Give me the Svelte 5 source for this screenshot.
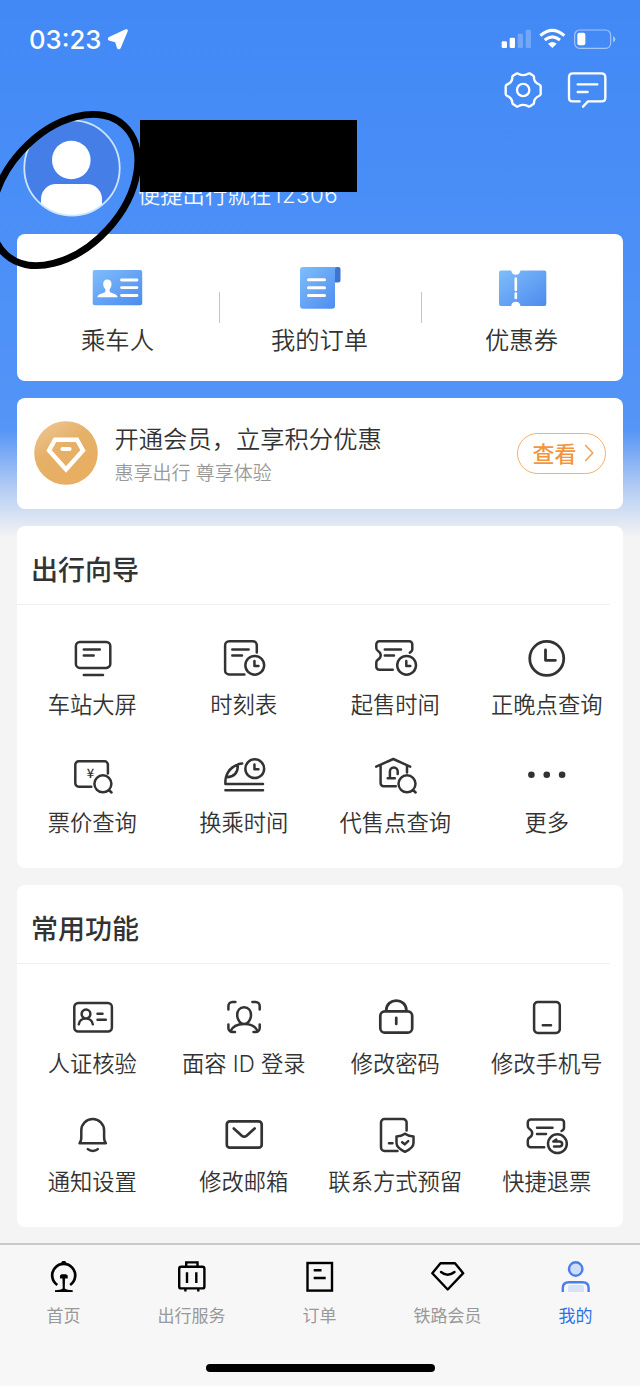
<script lang="ts">
	type Item = { label: string; d: string; sign?: string; width?: number };

	function circle(x: number, y: number, r: number) {
		return `M${x - r} ${y}a${r} ${r} 0 1 0 ${2 * r} 0a${r} ${r} 0 1 0 ${-2 * r} 0z`;
	}

	function box(x: number, y: number, w: number, h: number, r: number) {
		return `M${x + r} ${y}h${w - 2 * r}a${r} ${r} 0 0 1 ${r} ${r}v${h - 2 * r}a${r} ${r} 0 0 1 ${-r} ${r}h${2 * r - w}a${r} ${r} 0 0 1 ${-r} ${-r}v${2 * r - h}a${r} ${r} 0 0 1 ${r} ${-r}z`;
	}

	function clock(x: number, y: number) {
		return circle(x, y, 9.4) + `M${x - 0.3} ${y - 4.2}v4.8h4`;
	}

	function lens(x: number, y: number) {
		return circle(x, y, 8.5) + `M${x + 6} ${y + 6.2}l2.6 2.5`;
	}

	const sections: { title: string; items: Item[] }[] = [
		{
			title: "出行向导",
			items: [
				{ label: "车站大屏", d: box(6.9, 8, 34.4, 25.9, 4) + "M14.8 15.5H30.8M14.8 21.4H24.7M14.8 41H34" },
				{ label: "时刻表", d: "M36.8 18.5V11.2a4 4 0 0 0-4-4H9.1a4 4 0 0 0-4 4V36.4a4 4 0 0 0 4 4H24.4M12.3 15.5H28.6M12.3 21.4H22" + clock(34.75, 31.3) },
				{ label: "起售时间", d: "M37.8 18.6c1.8-.9 2.5-1.5 2.5-3.3V10.2a3 3 0 0 0-3-3H7.3a3 3 0 0 0-3 3V14c0 1.6 .5 2.3 2 3.2c3.2 1.9 3.2 6.3 0 8.2c-1.5 .9-2 1.6-2 3.2v4.1a3 3 0 0 0 3 3H20.7M12.8 15.5H29M12.8 21.4H22" + clock(34.6, 31.3) },
				{ label: "正晚点查询", d: circle(23.75, 24.4, 17) + "M22.5 16v10.3h9.9", width: 2.8 },
				{ label: "票价查询", d: "M38.9 21.5V12.7a3.4 3.4 0 0 0-3.4-3.4H9.7a3.4 3.4 0 0 0-3.4 3.4V31.3a3.4 3.4 0 0 0 3.4 3.4H22.3" + lens(33.9, 31.8), sign: "¥" },
				{ label: "换乘时间", d: "M22.2 11.4C14 12 6 19.5 5.4 28.5V32H43M5.4 38.3H43M17.9 12.6C18 20 14.5 25 6.5 25.2C7 20 11 15 17.9 12.6" + clock(34.75, 16.7) },
				{ label: "代售点查询", d: "M4.2 14.7L21.25 7L38.2 14.7M8.6 13.3V31.3a3 3 0 0 0 3 3H23.8M35 13.3V20.5M15.7 26.3H22.8M17.9 26V19.5a3.9 3.9 0 0 1 7.8 0v2.4" + lens(35, 31.8) },
				{ label: "更多", d: "M8.4 22.7h.01M23.75 22.7h.01M39.1 22.7h.01", width: 6.6 }
			]
		},
		{
			title: "常用功能",
			items: [
				{ label: "人证核验", d: box(5.3, 10, 37.6, 28.6, 4) + circle(17, 21, 4.4) + "M9.8 31.3C10.5 23.5 23 23.5 23.8 31.3M28.5 20.7H33.5M28.5 26.7H36.8" },
				{ label: "面容 ID 登录", d: "M8.4 16.5V13a4 4 0 0 1 4-4h3M32.4 9h3.3a4 4 0 0 1 4 4v3.5M8.4 31.5V35a4 4 0 0 0 4 4H15M39.7 31.5V35a4 4 0 0 1-4 4H33.5M24.1 14.3c4.5 0 6.9 3.3 6.9 7.8S28 31 24.1 31S17.2 26.6 17.2 22.1S19.6 14.3 24.1 14.3M10.5 38.3C12.5 33.5 18 31 24.1 31S35.7 33.5 37.7 38.3" },
				{ label: "修改密码", d: box(8.3, 18.3, 31.9, 21.4, 4.5) + "M14.2 18V17.6c0-13.3 20.2-13.3 20.2 0V18M24.25 24.9v6.1", width: 2.7 },
				{ label: "修改手机号", d: box(11.1, 9, 25.7, 30.9, 3.6) + "M19.8 32.3H28" },
				{ label: "通知设置", d: "M10.5 32.3C12 31 12.3 29 12.3 26V19.4a11.4 11.4 0 0 1 22.8 0V26c0 3 .3 5 1.8 6.3zM18.8 38.2c2.5 2.3 7.5 2.3 10 0" },
				{ label: "修改邮箱", d: box(6.8, 10.3, 34.9, 26.4, 3) + "M13.8 17.5l8 7.2q2.4 2 4.8 0l8-7.2", width: 2.7 },
				{ label: "联系方式预留", d: "M34.6 19.6V11.6a3.5 3.5 0 0 0-3.5-3.5H12.5A3.5 3.5 0 0 0 9 11.6V36.5a3.5 3.5 0 0 0 3.5 3.5H25.5M17 32.3H20.5M33 22.7c2.5 1.8 5 2.6 8.5 2.8v6.5c0 4-3.5 6.5-8.5 8.8c-5-2.3-8.5-4.8-8.5-8.8V25.5c3.5-.2 6-1 8.5-2.8M30.2 31.2l2.5 2.2 3.5-3.2" },
				{ label: "快捷退票", d: "M38.5 20c1.8-.9 2.5-1.5 2.5-3.3V11.6a3 3 0 0 0-3-3H7.8a3 3 0 0 0-3 3V15c0 1.6 .5 2.3 2 3.2c3.2 1.9 3.2 6.3 0 8.2c-1.5 .9-2 1.6-2 3.2v3.7a3 3 0 0 0 3 3H21.2M14 16.7H29.5M14 22.9H23" + circle(34.4, 32.7, 9.4) + "M31 35.6h5.3c3.8 0 3.8-5 0-5h-6l3-2" }
			]
		}
	];

	const tabs = ["首页", "出行服务", "订单", "铁路会员", "我的"];
</script>

<div class="page">
	<div class="status">
		<div class="time">
			<span>03:23</span>
			<svg width="22" height="22" viewBox="321 86 66 66">
				<path d="M379 94L329 117Q327 119 330 120L349 125L355 144Q356 147 358 144Z" fill="#fff" stroke="#fff" stroke-width="9" stroke-linejoin="round" />
			</svg>
		</div>
		<svg width="117" height="22" viewBox="60 85 351 66">
			<g fill="#fff">
				<rect x="65" y="125" width="16" height="20" rx="4" />
				<rect x="89" y="114" width="16" height="31" rx="4" />
				<rect x="113" y="102" width="16" height="43" rx="4" opacity="0.25" />
				<rect x="137" y="90" width="16" height="55" rx="4" opacity="0.25" />
				<path d="M217 145L204 132Q217 122 230 132Z" />
				<rect x="292" y="99" width="24" height="38" rx="6" />
				<path d="M399 110Q406 112 406 119T399 128Z" opacity="0.5" />
			</g>
			<g fill="none" stroke="#fff">
				<path d="M181 108Q217 76 253 108M194 121Q217 102 240 121" stroke-width="9" />
				<rect x="284" y="91" width="108" height="55" rx="15" stroke-width="3.5" opacity="0.5" />
			</g>
		</svg>
	</div>

	<div class="tools">
		<svg width="40" height="40" viewBox="68 211 120 120">
			<g fill="none" stroke="#fff" stroke-width="7" stroke-linejoin="round">
				<path d="M108 222Q112 220 115 223Q128 230 142 223Q146 220 150 222L159 228Q162 231 161 236Q163 249 176 254Q181 256 181 260V283Q181 287 176 289Q163 294 161 307Q162 312 158 314L149 320Q146 322 142 319Q128 312 115 319Q112 322 108 320L99 314Q95 312 96 307Q94 294 81 289Q76 287 76 283V260Q76 256 81 254Q94 249 96 236Q95 231 98 228Z" />
				<circle cx="128.5" cy="271" r="18.5" />
			</g>
		</svg>
		<svg width="40" height="40" viewBox="262 211 120 120">
			<path d="M300 305H279Q268 305 268 294V233Q268 221 280 221H365Q377 221 377 233V294Q377 305 366 305H325L310 321M294 254H353M294 277H324" fill="none" stroke="#fff" stroke-width="7" stroke-linecap="round" stroke-linejoin="round" />
		</svg>
	</div>

	<div class="profile">
		<svg width="98" height="98" viewBox="0 0 98 98">
			<defs>
				<clipPath id="face"><circle cx="49" cy="49" r="48" /></clipPath>
			</defs>
			<circle cx="49" cy="49" r="48" fill="#447ee6" />
			<g fill="#fff" clip-path="url(#face)">
				<circle cx="48.3" cy="41" r="19.3" />
				<rect x="18" y="65" width="61" height="50" rx="15" />
			</g>
			<circle cx="49" cy="49" r="47.7" fill="none" stroke="#cbe6fd" stroke-width="1.8" />
		</svg>
		<p>便捷出行就在<span>12306</span></p>
		<div class="redacted"></div>
	</div>
	<svg class="loop" width="160" height="180" viewBox="0 100 160 180">
		<ellipse cx="64.8" cy="190" rx="87.5" ry="58.2" transform="rotate(-47.5 64.8 190)" fill="none" stroke="#000" stroke-width="7" />
	</svg>

	<div class="card quick">
		<div class="entry">
			<svg width="56" height="48" viewBox="0 0 56 48">
				<defs>
					<linearGradient id="blue" x1="0" y1="0" x2="1" y2="1">
						<stop offset="0" stop-color="#7fbdfb" />
						<stop offset="1" stop-color="#4c8bee" />
					</linearGradient>
				</defs>
				<rect x="2.7" y="6" width="49.5" height="35.3" rx="2" fill="url(#blue)" />
				<path d="M17.3 15.5c2.8 0 4.2 2 4.2 4.6c0 2.4-.8 3.8-1.9 5.2v2.2c1 2 7.9 2 7.9 5.8H7.5c0-3.800 7.100-3.800 7.900-5.800v-2.200c-1.200-1.400-2.200-2.800-2.200-5.200c0-2.600 1.500-4.600 4.100-4.600z" fill="#fff" />
				<path d="M31.5 16H47M31.5 23.6H47M31.5 31.5H47" stroke="#fff" stroke-width="2.8" stroke-linecap="round" />
			</svg>
			<span>乘车人</span>
		</div>
		<div class="entry">
			<svg width="56" height="48" viewBox="0 0 56 48">
				<path d="M42 3h4.500q2 0 2 2v11q0 2.500-2.500 2.500h-4z" fill="#3c74d0" />
				<path d="M11 3H46q-3 0-3 3V41.700q0 3-3 3H11q-3 0-3-3V6q0-3 3-3z" fill="url(#blue)" />
				<path d="M16.500 15.700H32.500M16.500 23.700H32.500M16.500 31.600H32.500" stroke="#fff" stroke-width="3" stroke-linecap="round" />
			</svg>
			<span>我的订单</span>
		</div>
		<div class="entry">
			<svg width="56" height="48" viewBox="0 0 56 48">
				<path d="M7 6.500H17.200q.6 4.200 4.600 4.200t4.600-4.200H50.300q2 0 2 2V40q0 2-2 2H26.400q-.6-4.200-4.600-4.200t-4.600 4.200H7q-2 0-2-2V8.500q0-2 2-2z" fill="url(#blue)" />
				<path d="M21.800 14.600V26M21.800 29.500V34" stroke="#fff" stroke-width="2.600" stroke-linecap="round" />
			</svg>
			<span>优惠券</span>
		</div>
	</div>

	<div class="card member">
		<svg width="64" height="64" viewBox="0 0 64 64">
			<defs>
				<linearGradient id="gold" x1="0" y1="0" x2="0.6" y2="1">
					<stop offset="0" stop-color="#efc898" />
					<stop offset="0.5" stop-color="#e5b067" />
					<stop offset="1" stop-color="#e9ae61" />
				</linearGradient>
			</defs>
			<circle cx="32" cy="32" r="31.8" fill="url(#gold)" />
			<path d="M21 18.700H43L49 29.500L32 48.500L15 29.500Z" fill="none" stroke="#fff" stroke-width="4.400" />
			<path d="M28.500 28H35.500" stroke="#fff" stroke-width="4.200" stroke-linecap="round" />
		</svg>
		<div class="copy">
			<h3>开通会员，立享积分优惠</h3>
			<p>惠享出行 尊享体验</p>
		</div>
		<div class="view">
			<span>查看</span>
			<svg width="10" height="18" viewBox="0 0 10 18">
				<path d="M1.200 1L8.800 9L1.200 17" fill="none" stroke="#f0a050" stroke-width="1.500" />
			</svg>
		</div>
	</div>

	{#each sections as section}
		<div class="card section">
			<h2>{section.title}</h2>
			<div class="grid">
				{#each section.items as item}
					<div class="cell">
						<svg width="48" height="48" viewBox="0 0 48 48">
							<path d={item.d} fill="none" stroke="#333" stroke-width={item.width ?? 2.5} stroke-linecap="round" stroke-linejoin="round" />
							{#if item.sign}
								<text x="21.5" y="26.3" text-anchor="middle">{item.sign}</text>
							{/if}
						</svg>
						<span>{item.label}</span>
					</div>
				{/each}
			</div>
		</div>
	{/each}

	<div class="tabbar">
		<div class="tabs">
			{#each tabs as tab, i}
				<div class="tab" class:active={i === 4}>
					<svg width="40" height="40" viewBox="0 0 40 40" fill="none" stroke="#000" stroke-width="2.4">
						{#if i === 0}
							<path d="M13.3 29A11.5 11.5 0 1 1 26.1 29" stroke-width="2.7" />
							<path d="M17.5 7.5L18.3 5.5H21.2L22 7.5Z" fill="#000" stroke-width="1" />
							<path d="M17.5 18.2H22L23.7 19.5V22.5H21L20.8 32.5Q23 34 28.7 34.3V35.9H11V34.3Q16.5 34 18.7 32.5L18.5 22.5H16V19.5Z" fill="#000" stroke="none" />
						{:else if i === 1}
							<rect x="7.2" y="10.7" width="25.2" height="21.7" rx="2" />
							<path d="M14.2 10.5V6.4H25.5V10.5M15 16.3V27M24.3 16.3V27M13.4 32.5V35.5M26.3 32.5V35.5" />
						{:else if i === 2}
							<rect x="7.5" y="7" width="24.5" height="27.6" />
							<path d="M13.7 14.2H21.5M13.7 22H25.7" />
						{:else if i === 3}
							<path d="M12.5 7.2H27L35.2 17.2L19.7 33.5L4.3 17.2ZM13 16Q19.7 21.5 26.5 16" stroke-linejoin="round" stroke-linecap="round" />
						{:else}
							<circle cx="19.7" cy="13" r="6.7" fill="#d0ddf9" stroke="#4c7eea" />
							<path d="M12 36V31Q12 29 14 29H26Q28 29 28 31V36Z" fill="#d7e1f9" stroke="none" />
							<path d="M6.8 35.9V32Q6.8 26.2 13 26.2H26.5Q32.6 26.2 32.6 32V35.9" stroke="#4c7eea" />
						{/if}
					</svg>
					<span>{tab}</span>
				</div>
			{/each}
		</div>
		<div class="handle"></div>
	</div>
</div>

<style>
	:global(body) {
		background: #f4f4f4;
	}

	.page {
		position: relative;
		display: flex;
		flex-direction: column;
		width: 640px;
		height: 1386px;
		overflow: hidden;
		color: #333;
		font-family: Inter, "Noto Sans CJK SC", sans-serif;
		font-weight: 350;
		background: linear-gradient(#4289f6 0, #5193f7 390px, #5595f6 430px, #b6cef3 490px, #f4f4f4 538px);
	}

	svg {
		display: block;
		flex: none;
	}

	h2,
	h3,
	p {
		margin: 0;
		font-weight: inherit;
	}

	span {
		white-space: nowrap;
	}

	.status {
		display: flex;
		justify-content: space-between;
		align-items: center;
		height: 22px;
		padding: 28px 23px 0 29px;
	}

	.time {
		display: flex;
		align-items: center;
		gap: 6px;
		color: #fff;
		font-size: 25.7px;
		font-weight: 500;
		line-height: 22px;
	}

	.time span {
		padding-top: 2px;
	}

	.tools {
		display: flex;
		justify-content: flex-end;
		gap: 24.7px;
		height: 40px;
		padding: 20.3px 32.7px 0 0;
	}

	.profile {
		position: relative;
		display: flex;
		align-items: flex-start;
		gap: 17px;
		height: 114.7px;
		padding: 9px 0 0 23px;
	}

	.profile p {
		margin-top: 61px;
		color: #f2f8ff;
		font-size: 22.3px;
		line-height: 30px;
	}

	.profile span {
		margin-left: 1px;
		letter-spacing: 0.4px;
	}

	/* covers the user name */
	.redacted {
		position: absolute;
		left: 140px;
		top: 10px;
		width: 217px;
		height: 71.5px;
		background: #000;
	}

	.loop {
		position: absolute;
		left: 0;
		top: 100px;
		z-index: 2;
	}

	.card {
		flex: none;
		box-sizing: border-box;
		width: 606px;
		margin: 0 17px 17.5px;
		border-radius: 8px;
		background: #fff;
	}

	.quick {
		display: flex;
		height: 147px;
		margin-bottom: 17px;
	}

	.entry {
		position: relative;
		display: flex;
		flex: 1;
		flex-direction: column;
		align-items: center;
		padding-top: 30px;
		font-size: 24.3px;
		line-height: 30px;
	}

	.entry span {
		margin-top: 13px;
		padding-right: 1px;
	}

	.entry + .entry::before {
		content: "";
		position: absolute;
		left: 0;
		top: 58px;
		width: 1px;
		height: 31px;
		background: #c4c4c4;
	}

	.member {
		display: flex;
		align-items: center;
		height: 111px;
		padding: 0 17px;
	}

	.copy {
		flex: 1;
		margin-left: 16.5px;
		padding-top: 4px;
	}

	.copy h3 {
		font-size: 24.3px;
		line-height: 36px;
	}

	.copy p {
		color: #999;
		font-size: 19px;
		line-height: 33px;
	}

	.view {
		display: flex;
		align-items: center;
		justify-content: center;
		gap: 7px;
		box-sizing: border-box;
		width: 89px;
		height: 41px;
		padding-left: 3px;
		border: 1.5px solid #f0b070;
		border-radius: 21px;
		color: #f3953c;
		font-size: 22px;
		font-weight: 500;
		line-height: 30px;
	}

	.view span {
		padding-top: 2px;
	}

	.section {
		height: 341.5px;
	}

	.section h2 {
		box-sizing: border-box;
		height: 79px;
		margin-right: 13px;
		padding: 25px 0 0 14px;
		border-bottom: 1px solid #f0f0f0;
		font-size: 27px;
		font-weight: 500;
		line-height: 40px;
	}

	.grid {
		display: grid;
		grid-template-columns: repeat(4, 1fr);
		grid-auto-rows: 118px;
		padding-top: 29px;
	}

	.cell {
		display: flex;
		flex-direction: column;
		align-items: center;
		font-size: 22.3px;
		line-height: 30px;
	}

	.cell span {
		margin-top: 8px;
		padding-right: 1px;
	}

	.cell text {
		fill: #333;
		font: 500 13px "Noto Sans CJK SC", sans-serif;
	}

	.tabbar {
		position: absolute;
		left: 0;
		top: 1243px;
		width: 640px;
		height: 143px;
		box-sizing: border-box;
		border-top: 2px solid #c9c9c9;
		background: #f7f7f7;
	}

	.tabs {
		display: flex;
		height: 119px;
	}

	.tab {
		display: flex;
		flex: 1;
		flex-direction: column;
		align-items: center;
		padding-top: 11px;
		color: #999;
		font-size: 17px;
		font-weight: 400;
		line-height: 24px;
	}

	.tab span {
		margin-top: 8px;
		padding-right: 1px;
	}

	.active {
		color: #2f6fe8;
	}

	.handle {
		width: 229px;
		height: 8px;
		margin: 0 auto;
		border-radius: 4px;
		background: #000;
	}
</style>
